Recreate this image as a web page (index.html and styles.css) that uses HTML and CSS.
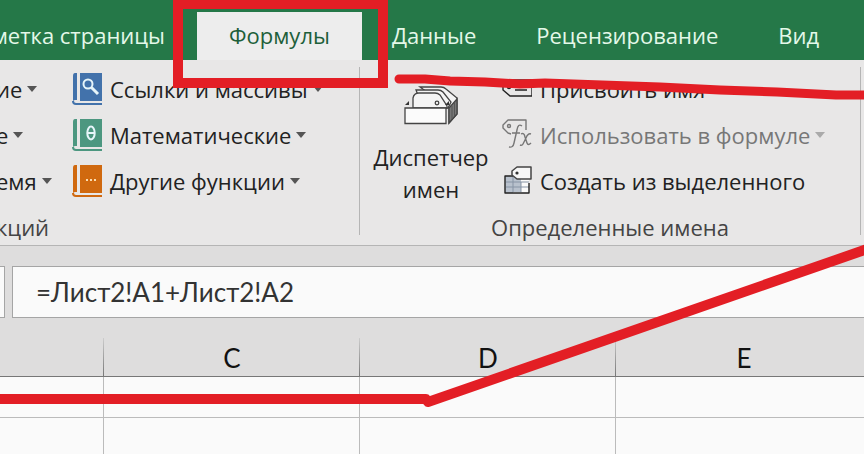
FILE: index.html
```html
<!DOCTYPE html>
<html lang="ru">
<head>
    <meta charset="UTF-8">
    <meta name="viewport" content="width=device-width, initial-scale=1.0">
    <title>Формулы</title>
    <link rel="stylesheet" href="styles.css">
</head>
<body>
    <nav class="tabs">
        <button class="tab tab-first">метка страницы</button>
        <button class="tab active">Формулы</button>
        <button class="tab">Данные</button>
        <button class="tab">Рецензирование</button>
        <button class="tab">Вид</button>
    </nav>

    <div class="ribbon">
        <section class="group library">
            <div class="group-body">
                <div class="list list-cut">
                    <button class="command">ие<svg class="arrow" viewBox="0 0 10 6"><path d="M0 0h10L5 6z"/></svg></button>
                    <button class="command">е<svg class="arrow" viewBox="0 0 10 6"><path d="M0 0h10L5 6z"/></svg></button>
                    <button class="command">емя<svg class="arrow" viewBox="0 0 10 6"><path d="M0 0h10L5 6z"/></svg></button>
                </div>
                <div class="list">
                    <button class="command">
                        <svg class="icon book blue" viewBox="0 0 30 32">
                            <path class="cover" d="M3 0H5V27H3Q1 27 1 29V3Q1 0 3 0ZM8 0H30V28H8Z"/>
                            <path class="pages" d="M1 28Q1 31 4 31H30"/>
                            <circle class="mark" cx="16" cy="11" r="4.5"/>
                            <path class="mark thick" d="M19.500 14.500L26 21"/>
                        </svg>
                        Ссылки и массивы
                        <svg class="arrow" viewBox="0 0 10 6"><path d="M0 0h10L5 6z"/></svg>
                    </button>
                    <button class="command">
                        <svg class="icon book green" viewBox="0 0 30 32">
                            <path class="cover" d="M3 0H5V27H3Q1 27 1 29V3Q1 0 3 0ZM8 0H30V28H8Z"/>
                            <path class="pages" d="M1 28Q1 31 4 31H30"/>
                            <ellipse class="mark" cx="19" cy="14" rx="3.700" ry="6.500"/>
                            <path class="mark" d="M16 14h6"/>
                        </svg>
                        Математические
                        <svg class="arrow" viewBox="0 0 10 6"><path d="M0 0h10L5 6z"/></svg>
                    </button>
                    <button class="command">
                        <svg class="icon book orange" viewBox="0 0 30 32">
                            <path class="cover" d="M3 0H5V27H3Q1 27 1 29V3Q1 0 3 0ZM8 0H30V28H8Z"/>
                            <path class="pages" d="M1 28Q1 31 4 31H30"/>
                            <path class="dots" d="M14 15h2M18 15h2M22 15h2"/>
                        </svg>
                        Другие функции
                        <svg class="arrow" viewBox="0 0 10 6"><path d="M0 0h10L5 6z"/></svg>
                    </button>
                </div>
            </div>
            <div class="group-name">кций</div>
        </section>

        <section class="group names">
            <div class="group-body">
                <button class="manager">
                    <svg class="manager-icon" viewBox="0 0 56 42">
                        <g fill="#f4f4f4" stroke="#444" stroke-width="1.300">
                            <path d="M17 4H38Q41 4 43 6L54 15V31L46 40V25Z"/>
                            <path d="M13 7H35Q38 7 40 9L48 19L45 25H20Z"/>
                            <path d="M10 25V15Q11 10 16 10H32Q35 10 37 12L44 23V25Z"/>
                            <path d="M46 25L54 16V31L46 40Z" fill="#777"/>
                            <path d="M2 25H43V40.500H2Z" fill="#fbfbfb"/>
                            <circle cx="34" cy="20" r="1.800"/>
                        </g>
                        <path d="M2 22L6 18V22ZM42 22L46 22V18Z" fill="#333"/>
                        <path d="M49 23V36M51.500 20V33" stroke="#555"/>
                    </svg>
                    <span>Диспетчер<br>имен</span>
                </button>
                <div class="list">
                    <button class="command">
                        <svg class="icon" viewBox="0 0 30 32">
                            <path class="line" d="M8 7H30V23H8L1 17V12Z"/>
                            <circle class="line" cx="7" cy="14" r="1.500"/>
                            <path class="line" d="M13 12h12M13 17h12"/>
                        </svg>
                        Присвоить имя
                    </button>
                    <button class="command" disabled>
                        <svg class="icon" viewBox="0 0 30 32">
                            <path class="line" d="M9 15L6 14L1 9V6L6 1H24V11"/>
                            <circle class="line" cx="7" cy="7" r="1.500"/>
                            <path class="line" d="M20 7Q16 4 15 11L12 24Q11 29 7 28M10 14H18M19 15Q22 13 23 18L25 24Q26 27 29 24M29 15Q26 14 24 19L21 25Q20 27 18 26"/>
                        </svg>
                        Использовать в формуле
                        <svg class="arrow" viewBox="0 0 10 6"><path d="M0 0h10L5 6z"/></svg>
                    </button>
                    <button class="command">
                        <svg class="icon" viewBox="0 0 30 32">
                            <path d="M3 11H27V28H3Z" fill="#fafafa"/>
                            <path d="M3 11H11V28H3ZM3 11H19V27H3Z" fill="#b8c1cd"/>
                            <path d="M4 17H27M4 22H27M11 12V27M19 17V27" stroke="#8794a5" fill="none"/>
                            <path class="line" d="M11 11H3V28H27V18"/>
                            <path d="M15 2H29V14H15L10 10V6Z" fill="#f7f7f7" stroke="#444" stroke-width="1.500" stroke-linejoin="round"/>
                            <circle cx="15" cy="8" r="1.600" fill="#333"/>
                        </svg>
                        Создать из выделенного
                    </button>
                </div>
            </div>
            <div class="group-name">Определенные имена</div>
        </section>
    </div>

    <div class="formula-bar">
        <div class="name-box"></div>
        <input class="formula" type="text" aria-label="Строка формул" value="=Лист2!A1+Лист2!A2">
    </div>

    <div class="sheet">
        <table>
            <colgroup>
                <col class="col-cut">
                <col>
                <col>
                <col>
            </colgroup>
            <thead>
                <tr><th></th><th>C</th><th>D</th><th>E</th></tr>
            </thead>
            <tbody>
                <tr><td></td><td></td><td></td><td></td></tr>
                <tr><td></td><td></td><td></td><td></td></tr>
            </tbody>
        </table>
    </div>

    <!-- red pen marks over the window -->
    <svg class="marks" viewBox="0 0 864 454">
        <path d="M178 4H383V83H178Z" stroke-width="10" stroke-linejoin="miter"/>
        <path d="M399 79L425 79L450 81L485 82L520 84L545 83L602 85L660 87L720 90L777 92L836 95H870"/>
        <path d="M-5 399H426L428 402L870 248" stroke-width="10"/>
    </svg>
</body>
</html>
```
FILE: styles.css
```css
* {
    box-sizing: border-box;
}
body {
    margin: 0;
    min-height: 100vh;
    display: flex;
    flex-direction: column;
    position: relative;
    overflow: hidden;
    font-family: "Open Sans", "Noto Sans", sans-serif;
    font-size: 22px;
    color: #222;
    background-color: #fafafa;
}
button {
    font: inherit;
    color: inherit;
    background: none;
    border: none;
    padding: 0;
    white-space: nowrap;
    flex-shrink: 0;
}

/* tabs */
.tabs {
    display: flex;
    height: 60px;
    padding-top: 12px;
    background-color: #257848;
    color: #e4f8e9;
}
.tab {
    padding: 0 30px 2px;
    font-weight: 500;
}
.tab-first {
    width: 197px;
    padding-right: 32px;
    display: flex;
    justify-content: flex-end;
    align-items: center;
}
.tab.active {
    padding: 0 32px 2px;
    background-color: #ededed;
    color: #1d5f3a;
    font-weight: 400;
}

/* ribbon */
.ribbon {
    display: flex;
    height: 186px;
    padding: 7px 0 10px;
    background-color: #e8e7e7;
    border-bottom: 1px solid #b5b5b5;
}
.group {
    display: flex;
    flex-direction: column;
    border-right: 1px solid #b5b5b5;
}
.library {
    width: 364px;
    margin-left: -4px;
}
.names {
    width: 501px;
}
.group-body {
    display: flex;
}
.list-cut {
    width: 76px;
}
.command {
    display: flex;
    align-items: center;
    gap: 8px;
    height: 46px;
    padding-bottom: 2px;
}
.command:disabled {
    color: #777;
}
.icon {
    width: 30px;
    height: 32px;
}
.arrow {
    width: 10px;
    height: 6px;
    margin-left: -3px;
    fill: #555;
}
.command:disabled .arrow {
    fill: #aaa;
}
.line {
    fill: none;
    stroke: currentColor;
    stroke-width: 1.4;
    stroke-linejoin: round;
}
.group-name {
    line-height: 32px;
    margin-top: 6px;
    color: #444;
}
.names .group-name {
    text-align: center;
}
.blue {
    color: #4272ab;
}
.green {
    color: #4c9780;
}
.orange {
    color: #d0690f;
}
.book .cover {
    fill: currentColor;
}
.book .pages {
    fill: none;
    stroke: currentColor;
    stroke-width: 2;
}
.book .mark {
    fill: none;
    stroke: #e6f5fa;
    stroke-width: 2;
}
.book .thick {
    stroke-width: 3;
}
.book .dots {
    stroke: #fbdcae;
    stroke-width: 2;
}
.manager {
    width: 142px;
    display: flex;
    flex-direction: column;
    align-items: center;
    padding-top: 16px;
    line-height: 32px;
}
.manager-icon {
    width: 56px;
    height: 42px;
    margin-bottom: 16px;
    fill: none;
}

/* formula bar */
.formula-bar {
    display: flex;
    gap: 7px;
    height: 72px;
    padding: 20px 0 0;
    background-color: #dedddd;
}
.name-box {
    width: 5px;
    height: 52px;
    background-color: #fafafa;
    border: 1px solid #a5a5a5;
    border-left: none;
}
.formula {
    flex: 1;
    min-width: 0;
    height: 52px;
    padding: 0 23px;
    font-family: Lato, "Open Sans", sans-serif;
    font-size: 26px;
    color: #333;
    background-color: #fafafa;
    border: 1px solid #a5a5a5;
    border-right: none;
    border-radius: 0;
}

/* sheet */
.sheet {
    overflow: hidden;
}
table {
    width: 872px;
    table-layout: fixed;
    border-collapse: separate;
    border-spacing: 0;
}
.col-cut {
    width: 104px;
}
th {
    height: 59px;
    padding: 22px 0 0;
    font-family: Lato, "Open Sans", sans-serif;
    font-size: 26px;
    font-weight: 400;
    line-height: 36px;
    color: #111;
    background: linear-gradient(#ccc, #777) right bottom / 1px 38px no-repeat #dedddd;
    border-bottom: 1px solid #777;
}
td {
    height: 41px;
    padding: 0;
    border-right: 1px solid #bbb;
    border-bottom: 1px solid #bbb;
}

.marks {
    position: absolute;
    top: 0;
    left: 0;
    width: 864px;
    height: 454px;
    fill: none;
    stroke: #e31e25;
    stroke-width: 9;
    stroke-linecap: round;
    stroke-linejoin: round;
    pointer-events: none;
}
```
